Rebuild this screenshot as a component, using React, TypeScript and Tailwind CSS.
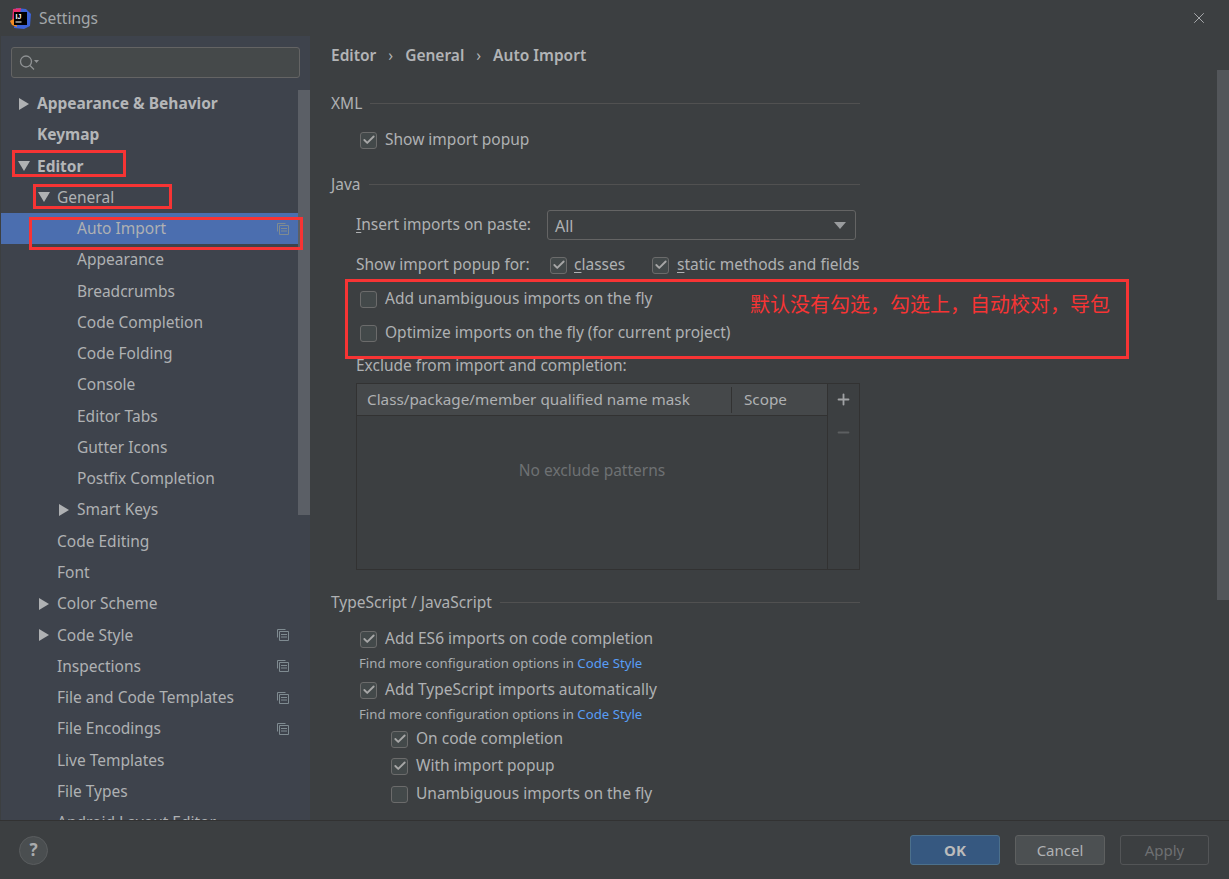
import { X, Plus, Minus, Check } from 'lucide-react';

type TreeItem = { label: string; indent: number; arrow?: 'right' | 'down'; bold?: boolean; selected?: boolean; copy?: boolean };

const tree: TreeItem[] = [
  { label: 'Appearance & Behavior', indent: 37, arrow: 'right', bold: true },
  { label: 'Keymap', indent: 37, bold: true },
  { label: 'Editor', indent: 37, arrow: 'down', bold: true },
  { label: 'General', indent: 57, arrow: 'down' },
  { label: 'Auto Import', indent: 77, selected: true, copy: true },
  { label: 'Appearance', indent: 77 },
  { label: 'Breadcrumbs', indent: 77 },
  { label: 'Code Completion', indent: 77 },
  { label: 'Code Folding', indent: 77 },
  { label: 'Console', indent: 77 },
  { label: 'Editor Tabs', indent: 77 },
  { label: 'Gutter Icons', indent: 77 },
  { label: 'Postfix Completion', indent: 77 },
  { label: 'Smart Keys', indent: 77, arrow: 'right' },
  { label: 'Code Editing', indent: 57 },
  { label: 'Font', indent: 57 },
  { label: 'Color Scheme', indent: 57, arrow: 'right' },
  { label: 'Code Style', indent: 57, arrow: 'right', copy: true },
  { label: 'Inspections', indent: 57, copy: true },
  { label: 'File and Code Templates', indent: 57, copy: true },
  { label: 'File Encodings', indent: 57, copy: true },
  { label: 'Live Templates', indent: 57 },
  { label: 'File Types', indent: 57 },
  { label: 'Android Layout Editor', indent: 57 },
];

const Arrow = ({ dir }: { dir: 'right' | 'down' }) => (
  <svg width="12" height="12" viewBox="0 0 12 12" className="shrink-0">
    {dir === 'right' ? <path d="M1 0 L11 6 L1 12 Z" fill="#afb1b3" /> : <path d="M0 1 L12 1 L6 11 Z" fill="#afb1b3" />}
  </svg>
);

const CopyIcon = () => (
  <svg width="12" height="12" viewBox="0 0 12 12" fill="none" stroke="#7f8b91" strokeWidth="1">
    <path d="M.5 8.5V.5h8" />
    <path d="M2.5 2.500h9v9h-9z" />
    <path d="M4 5.500h6M4 8h6" />
  </svg>
);

const Box = ({ checked, className = '' }: { checked?: boolean; className?: string }) => (
  <span className={`flex h-[17px] w-[17px] shrink-0 items-center justify-center rounded-[3px] border border-[#6b6b6b] bg-[#43494a] ${className}`}>
    {checked && <Check size={14} strokeWidth={3.2} color="#a7a7a7" />}
  </span>
);

const Option = ({ label, checked, className = '' }: { label: string; checked?: boolean; className?: string }) => (
  <div className={`flex items-center gap-2 ${className}`}>
    <Box checked={checked} />
    <span>{label}</span>
  </div>
);

const Section = ({ title, className = '' }: { title: string; className?: string }) => (
  <div className={`flex items-center gap-2 ${className}`}>
    <span>{title}</span>
    <span className="-mt-[2px] h-px flex-1 bg-[#515151]" />
  </div>
);

const ConfigHint = () => (
  <div className="h-[19px] pl-[28px] text-[13.2px] leading-[18px] text-[#a9adb0]">
    Find more configuration options in <span className="text-[#589df6]">Code Style</span>
  </div>
);

const Logo = () => (
  <svg width="21" height="21" viewBox="0 0 21 21" className="shrink-0">
    <path d="M6 0 L16 1 L21 6 L20 18 L14 21 L4 20 Z" fill="#3c63d8" />
    <path d="M3 1 L11 0 L9 11 L2 15 Z" fill="#e8316e" />
    <path d="M0 13 L5 10 L7 19 L2 17 Z" fill="#f58a1f" />
    <rect x="4" y="4" width="13" height="13" fill="#000" />
    <text x="5.500" y="11" fontSize="7" fontWeight="700" fill="#fff" fontFamily="Liberation Sans, sans-serif">IJ</text>
    <rect x="5.500" y="13.500" width="6" height="1" fill="#fff" />
  </svg>
);

export default function App() {
  return (
    <div className="relative flex h-[879px] w-[1229px] flex-col overflow-hidden bg-[#3c3f41] text-[15.5px] text-[#afb1b3] [font-family:'Noto_Sans','Noto_Sans_CJK_SC',sans-serif]">
      <div className="flex h-[36px] shrink-0 items-center pl-[10px] pr-[21px]">
        <Logo />
        <span className="ml-[8px] flex-1 pt-px text-[15.5px] text-[#a3a7aa]">Settings</span>
        <X size={18} strokeWidth={1.3} color="#a9abad" />
      </div>

      <div className="flex min-h-0 flex-1">
        <aside className="relative ml-px h-[784px] w-[309px] shrink-0 overflow-hidden bg-[#3e434c]">
          <div className="ml-[10px] mt-[11px] flex h-[31px] w-[289px] items-center gap-px rounded-[3px] border border-[#646464] bg-[#45494a] pl-[7px]">
            <svg width="20" height="18" viewBox="0 0 20 18" fill="none" stroke="#8f9294" strokeWidth="1.3">
              <circle cx="7" cy="7.500" r="5.500" />
              <path d="M11 11.500 L15 15.500" />
              <path d="M15 6h5l-2.500 3z" fill="#8f9294" stroke="none" />
            </svg>
          </div>
          <div className="mt-[10px]">
            {tree.map((item) => (
              <div
                key={item.label}
                className={`relative flex h-[31.27px] items-center pr-[21px] ${item.selected ? 'bg-[#4b6eaf]' : ''} ${item.bold ? 'font-bold text-[#b4b6b8]' : ''}`}
                style={{ paddingLeft: item.indent - 1 }}
              >
                {item.arrow && (
                  <span className="absolute" style={{ left: item.indent - 20 }}>
                    <Arrow dir={item.arrow} />
                  </span>
                )}
                <span className="flex-1">{item.label}</span>
                {item.copy && <CopyIcon />}
              </div>
            ))}
          </div>
          <div className="absolute left-[297px] top-[54px] h-[425px] w-[12px] bg-[#5b5f66]" />
        </aside>

        <main className="relative min-w-0 flex-1 pl-[21px]">
          <div className="flex h-[39px] items-center gap-[12px] font-semibold text-[#b2b4b6]">
            <span>Editor</span>
            <span className="font-normal">›</span>
            <span>General</span>
            <span className="font-normal">›</span>
            <span>Auto Import</span>
          </div>

          <div className="w-[529px]">
            <Section title="XML" className="mt-[16px] h-[26px]" />
            <Option label="Show import popup" checked className="ml-[29px] mt-[7px] h-[32px]" />

            <Section title="Java" className="mt-[16px] h-[26px]" />
            <div className="ml-[25px] mt-[12px] flex h-[30px] items-center">
              <span className="w-[191px]">
                <span className="underline underline-offset-2">I</span>nsert imports on paste:
              </span>
              <div className="flex h-[30px] w-[309px] items-center justify-between rounded-[3px] border border-[#646464] bg-[#3c3f41] pl-[7px] pr-[9px]">
                <span className="pt-px text-[16px]">All</span>
                <svg width="12" height="7" viewBox="0 0 12 7"><path d="M0 0h12L6 7z" fill="#9a9c9e" /></svg>
              </div>
            </div>
            <div className="ml-[25px] mt-[9px] flex h-[32px] items-center">
              <span className="w-[194px]">Show import popup for:</span>
              <Box checked />
              <span className="ml-[7px] w-[78px]"><span className="underline underline-offset-2">c</span>lasses</span>
              <Box checked />
              <span className="ml-[8px] whitespace-nowrap"><span className="underline underline-offset-2">s</span>tatic methods and fields</span>
            </div>
            <Option label="Add unambiguous imports on the fly" className="ml-[29px] mt-px h-[34px]" />
            <Option label="Optimize imports on the fly (for current project)" className="ml-[29px] h-[34px]" />
            <div className="ml-[25px] flex h-[32px] items-center">Exclude from import and completion:</div>

            <div className="ml-[25px] mt-px flex h-[187px] w-[504px] border border-[#323232]">
              <div className="flex flex-1 flex-col">
                <div className="flex h-[32px] items-center border-b border-[#323232] bg-[#45484a] text-[15.25px]">
                  <span className="flex h-[26px] w-[375px] items-center border-r border-[#323232] pl-[10px]">Class/package/member qualified name mask</span>
                  <span className="pl-[12px]">Scope</span>
                </div>
                <div className="flex flex-1 items-center justify-center pb-[43px] text-[#6e7173]">No exclude patterns</div>
              </div>
              <div className="flex w-[32px] flex-col items-center border-l border-[#323232] pt-[7px]">
                <Plus size={17} strokeWidth={2.6} color="#a0a2a4" />
                <Minus size={17} strokeWidth={2.6} color="#5c5f61" className="mt-[16px]" />
              </div>
            </div>

            <Section title="TypeScript / JavaScript" className="mt-[20px] h-[26px]" />
            <Option label="Add ES6 imports on code completion" checked className="ml-[29px] mt-[8px] h-[30px]" />
            <ConfigHint />
            <Option label="Add TypeScript imports automatically" checked className="ml-[29px] mt-[2px] h-[30px]" />
            <ConfigHint />
            <Option label="On code completion" checked className="ml-[60px] mt-[2px] h-[26px]" />
            <Option label="With import popup" checked className="ml-[60px] mt-px h-[26px]" />
            <Option label="Unambiguous imports on the fly" className="ml-[60px] mt-[2px] h-[26px]" />
          </div>

          <div className="absolute left-[907px] top-[34px] h-[530px] w-[12px] bg-[#53565a]" />
        </main>
      </div>

      <footer className="flex h-[59px] shrink-0 items-center justify-between border-t border-[#323232] pl-[19px] pr-[20px]">
        <div className="flex h-[29px] w-[29px] items-center justify-center rounded-full border border-[#5a5d5f] bg-[#4a4e50] text-[17px] font-bold text-[#a9abad]">?</div>
        <div className="flex gap-[15px] text-[15px]">
          <button className="h-[30px] w-[90px] rounded-[3px] border border-[#4c708c] bg-[#365880] font-bold text-[#bbbbbb]">OK</button>
          <button className="h-[30px] w-[90px] rounded-[3px] border border-[#5e6060] bg-[#4c5052] text-[#b0b2b4]">Cancel</button>
          <button className="h-[30px] w-[89px] rounded-[3px] border border-[#535557] text-[#6e7072]">Apply</button>
        </div>
      </footer>

      <div className="absolute left-[12px] top-[150px] h-[27px] w-[114px] border-[3px] border-[#f73434]" />
      <div className="absolute left-[33px] top-[184px] h-[25px] w-[139px] border-[3px] border-[#f73434]" />
      <div className="absolute left-[29px] top-[217px] h-[33px] w-[274px] border-[3px] border-[#f73434]" />
      <div className="absolute left-[345px] top-[279px] h-[80px] w-[784px] border-[3px] border-[#f73434]" />
      <div className="absolute left-[750px] top-[291px] text-[20px] leading-[28px] text-[#f73434]">默认没有勾选，勾选上，自动校对，导包</div>
    </div>
  );
}
